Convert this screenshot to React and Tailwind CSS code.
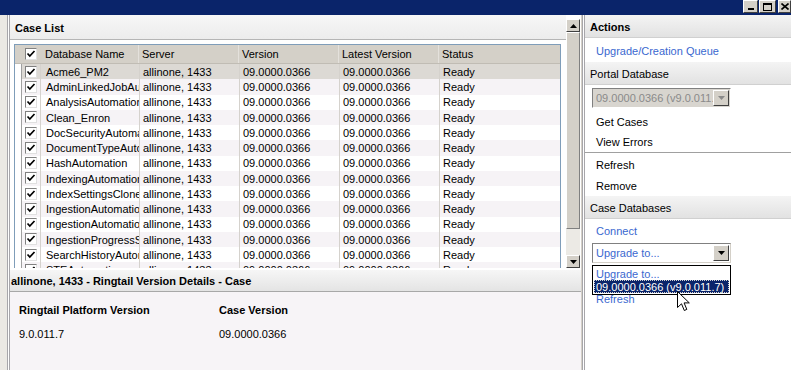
import React from "react";

const rows = [
  "Acme6_PM2",
  "AdminLinkedJobAutomation",
  "AnalysisAutomation",
  "Clean_Enron",
  "DocSecurityAutomation",
  "DocumentTypeAutomation",
  "HashAutomation",
  "IndexingAutomation",
  "IndexSettingsCloneAutomation",
  "IngestionAutomation",
  "IngestionAutomation2",
  "IngestionProgressStatus",
  "SearchHistoryAutomation",
  "STEAutomation",
];

function Check() {
  return (
    <div className="w-[12px] h-[12px] border border-t-[#808080] border-l-[#808080] border-b-[#e0e0e0] border-r-[#e0e0e0] bg-white flex items-center justify-center">
      <svg width="10" height="10" viewBox="0 0 10 10">
        <path d="M1.5 4.5 L3.8 7 L8.5 2" fill="none" stroke="#000" strokeWidth="1.7" />
      </svg>
    </div>
  );
}

function Arrow({ up, color = "#000" }) {
  return (
    <svg width="7" height="4" viewBox="0 0 7 4">
      <path d={up ? "M3.5 0 L7 4 L0 4 Z" : "M0 0 L7 0 L3.5 4 Z"} fill={color} />
    </svg>
  );
}

function Bevel({ className, children }) {
  return (
    <div className={"bg-[#d4d0c8] border border-t-white border-l-white border-r-[#404040] border-b-[#404040] flex items-center justify-center " + className}>
      {children}
    </div>
  );
}

function PanelHeader({ children, bold }) {
  return (
    <div className={"h-[23px] shrink-0 flex items-center pl-[5px] pt-[2px] bg-gradient-to-b from-[#f4f4f4] to-[#e2e2e2] border-b border-[#d0d0d0] " + (bold ? "font-bold" : "")}>
      {children}
    </div>
  );
}

export default function App() {
  return (
    <div
      className="w-[791px] h-[370px] overflow-hidden bg-white flex flex-col relative text-[11px] text-black"
      style={{ fontFamily: '"Liberation Sans", Arial, sans-serif' }}
    >
      {/* title bar */}
      <div className="h-[15px] shrink-0 bg-[#0a246a] flex justify-end items-start">
        <Bevel className="w-[15px] h-[13px] items-end pb-[2px]">
          <div className="w-[6px] h-[2px] bg-black" />
        </Bevel>
        <Bevel className="w-[17px] h-[13px] ml-[1px]">
          <div className="w-[9px] h-[8px] border border-black border-t-2" />
        </Bevel>
        <Bevel className="w-[13px] h-[13px] ml-[2px] justify-start pl-[2px]">
          <svg width="8" height="7" viewBox="0 0 8 7">
            <path d="M0.5 0.5 L7.5 6.5 M7.5 0.5 L0.5 6.5" stroke="#000" strokeWidth="1.6" />
          </svg>
        </Bevel>
      </div>

      <div className="flex flex-1 min-h-0">
        {/* left strip */}
        <div className="w-[7px] bg-[#ebe9e4]" />
        <div className="w-[1px] bg-[#a7a6aa]" />
        <div className="w-[1px] bg-white" />
        <div className="w-[1px] bg-[#a7a6aa]" />

        {/* main column */}
        <div className="w-[571px] flex flex-col">
          <div className="h-[253px] flex shrink-0">
            <div className="w-[556px] flex flex-col">
              <div className="h-[25px] shrink-0 flex items-center pl-[5px] pt-[2px] font-bold bg-gradient-to-b from-[#f7f7f7] to-[#ececec] border-b border-[#b5b5b5]">
                Case List
              </div>
              <div className="flex-1 min-h-0 pt-[4px] pl-[4px] pr-[5px] flex">
                <div className="flex-1 border border-b-0 border-[#7f9db9] flex flex-col overflow-hidden">
                  {/* table header */}
                  <div className="h-[19px] shrink-0 bg-[#d4d0c8] flex items-center pl-[6px] border-b border-[#c0bcb4]">
                    <div className="w-[19px] flex justify-center">
                      <Check />
                    </div>
                    <div className="w-[99px] pl-[5px] pt-[1px] h-full flex items-center border-r border-[#e4e1dc]">Database Name</div>
                    <div className="w-[100px] pl-[3px] pt-[1px] h-full flex items-center border-r border-[#e4e1dc]">Server</div>
                    <div className="w-[100px] pl-[3px] pt-[1px] h-full flex items-center border-r border-[#e4e1dc]">Version</div>
                    <div className="w-[100px] pl-[3px] pt-[1px] h-full flex items-center border-r border-[#e4e1dc]">Latest Version</div>
                    <div className="flex-1 pl-[3px] pt-[1px]">Status</div>
                  </div>
                  {/* rows */}
                  <div className="flex-1 min-h-0 ml-[6px] border-l border-[#a0a0a0] overflow-hidden">
                    {rows.map((name, i) => (
                      <div
                        key={name}
                        className={
                          "h-[15.25px] flex items-center " +
                          (i === 0 ? "bg-[#dcd9d4]" : i % 2 === 1 ? "bg-[#f6f3f6]" : "bg-white")
                        }
                      >
                        <div className="w-[19px] h-full flex items-center justify-center border-r border-[#d5d2cd]">
                          <Check />
                        </div>
                        <div className="w-[99px] h-full pl-[5px] pt-[1px] flex items-center overflow-hidden whitespace-nowrap border-r border-[#d5d2cd]">{name}</div>
                        <div className="w-[100px] h-full pl-[3px] pt-[1px] flex items-center border-r border-[#d5d2cd]">allinone, 1433</div>
                        <div className="w-[100px] h-full pl-[3px] pt-[1px] flex items-center border-r border-[#d5d2cd]">09.0000.0366</div>
                        <div className="w-[100px] h-full pl-[3px] pt-[1px] flex items-center border-r border-[#d5d2cd]">09.0000.0366</div>
                        <div className="flex-1 h-full pl-[3px] pt-[1px] flex items-center">Ready</div>
                      </div>
                    ))}
                  </div>
                </div>
              </div>
            </div>
            {/* scrollbar */}
            <div className="w-[15px] flex flex-col pt-[4px]">
              <Bevel className="h-[13px] w-[14px] shrink-0">
                <Arrow up />
              </Bevel>
              <div className="h-[197px] w-[14px] shrink-0 bg-[#d4d0c8] border border-t-white border-l-white border-r-[#808080] border-b-[#808080]" />
              <div className="flex-1 w-[14px] bg-[#eceae5]" />
              <Bevel className="h-[13px] w-[14px] shrink-0">
                <Arrow />
              </Bevel>
            </div>
          </div>

          {/* details */}
          <div className="flex-1 flex flex-col min-h-0">
            <div className="h-[2px] bg-white shrink-0" />
            <div className="h-[22px] shrink-0 flex items-center pl-[1px] pt-[2px] font-bold bg-gradient-to-b from-[#f6f6f6] to-[#e4e4e4] border-b border-[#a8a8a8]">
              allinone, 1433 - Ringtail Version Details - Case
            </div>
            <div className="flex-1 bg-[#f7f4f7] pl-[9px] pt-[11px]">
              <div className="flex font-bold h-[14px] items-center">
                <div className="w-[200px]">Ringtail Platform Version</div>
                <div>Case Version</div>
              </div>
              <div className="flex mt-[10px] h-[14px] items-center">
                <div className="w-[200px]">9.0.011.7</div>
                <div>09.0000.0366</div>
              </div>
            </div>
          </div>
        </div>

        {/* splitter */}
        <div className="w-[1px] bg-[#d4d0c8]" />
        <div className="w-[1px] bg-[#a7a6aa]" />
        <div className="w-[1px] bg-white" />
        <div className="w-[1px] bg-[#a7a6aa]" />

        {/* right panel */}
        <div className="flex-1 flex flex-col relative">
          <PanelHeader bold>Actions</PanelHeader>
          <div className="h-[24px] shrink-0 flex items-center pl-[11px] pt-[2px] text-[#3a68d0]">Upgrade/Creation Queue</div>
          <PanelHeader>Portal Database</PanelHeader>
          <div className="mt-[3px] ml-[7px] w-[139px] h-[20px] shrink-0 flex items-center bg-[#d8d5cf] border border-t-[#808080] border-l-[#808080] border-r-white border-b-white">
            <div className="flex-1 pl-[3px] pt-[1px] overflow-hidden whitespace-nowrap text-[#8a8a8a]">09.0000.0366 (v9.0.011.7)</div>
            <Bevel className="w-[16px] h-[16px] mr-[1px] shrink-0">
              <Arrow color="#8a8a8a" />
            </Bevel>
          </div>
          <div className="h-[22px] mt-[2px] shrink-0 flex items-center pl-[11px] pt-[2px]">Get Cases</div>
          <div className="h-[21px] shrink-0 flex items-center pl-[11px] pt-[1px] border-b border-[#a0a0a0]">View Errors</div>
          <div className="h-[22px] shrink-0 flex items-center pl-[11px] pt-[2px]">Refresh</div>
          <div className="h-[21px] shrink-0 flex items-center pl-[11px] pt-[2px]">Remove</div>
          <PanelHeader>Case Databases</PanelHeader>
          <div className="h-[22px] shrink-0 flex items-center pl-[11px] pt-[2px] text-[#3a68d0]">Connect</div>
          <div className="mt-[2px] ml-[7px] w-[139px] h-[20px] shrink-0 flex items-center bg-white border border-t-[#808080] border-l-[#808080] border-r-[#d4d0c8] border-b-[#d4d0c8]">
            <div className="flex-1 pl-[3px] pt-[1px] text-[#3a68d0]">Upgrade to...</div>
            <Bevel className="w-[16px] h-[16px] mr-[1px] shrink-0">
              <Arrow />
            </Bevel>
          </div>
          <div className="mt-[29px] h-[14px] shrink-0 flex items-center pl-[11px] text-[#3a68d0]">Refresh</div>

          {/* open dropdown list */}
          <div className="absolute left-[7px] top-[250px] w-[139px] h-[30px] bg-white border border-black p-[1px] flex flex-col">
            <div className="h-[13px] flex items-center pl-[2px] pt-[1px] text-[#3a68d0]">Upgrade to...</div>
            <div className="h-[13px] flex items-center pl-[2px] pt-[1px] bg-[#0a246a] text-white outline-1 outline-dotted outline-[#d0d0d0] -outline-offset-1">
              09.0000.0366 (v9.0.011.7)
            </div>
          </div>
        </div>
      </div>

      {/* mouse cursor */}
      <svg className="absolute left-[677px] top-[291px]" width="14" height="22" viewBox="0 0 14 22">
        <path d="M0.5 0.5 L0.5 16.5 L4.5 12.8 L7.3 19.5 L9.8 18.4 L7.1 11.9 L12.3 11.9 Z" fill="#fff" stroke="#000" strokeWidth="1" />
      </svg>
    </div>
  );
}
